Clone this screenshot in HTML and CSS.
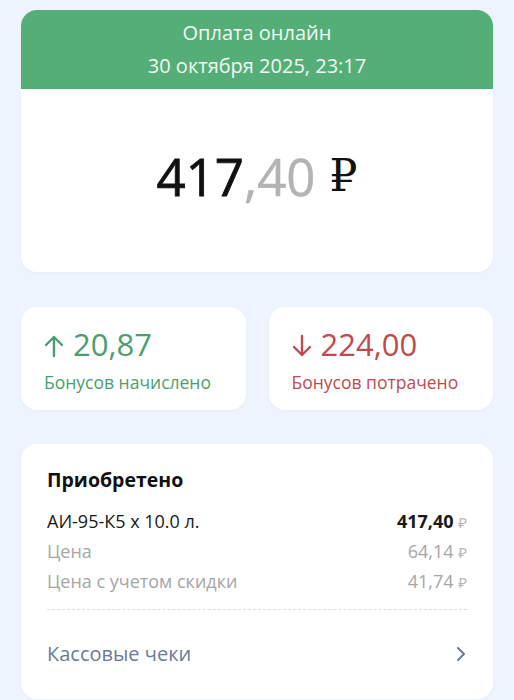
FILE: index.html
```html
<!DOCTYPE html>
<html lang="ru">

<head>
    <meta charset="UTF-8">
    <meta name="viewport" content="width=device-width, initial-scale=1.0">
    <title>Оплата онлайн</title>
    <link rel="stylesheet" href="styles.css">
</head>

<body>
    <main class="page">
        <section class="card payment">
            <header class="payment-head">
                <div>Оплата онлайн</div>
                <div>30 октября 2025, 23:17</div>
            </header>
            <div class="payment-sum">
                <span class="sum-int">417</span><span class="sum-dec">,40</span>
                <span class="sum-cur">₽</span>
            </div>
        </section>

        <section class="bonuses">
            <div class="card bonus bonus-plus">
                <div class="bonus-value">
                    <svg class="arrow" width="20" height="24" viewBox="0 0 20 24">
                        <path d="M10 22 V3 M2 11 L10 3 L18 11" fill="none" stroke="currentColor" stroke-width="2.4" stroke-linecap="round" stroke-linejoin="round" />
                    </svg>20,87
                </div>
                <div class="bonus-label">Бонусов начислено</div>
            </div>
            <div class="card bonus bonus-minus">
                <div class="bonus-value">
                    <svg class="arrow" width="20" height="24" viewBox="0 0 20 24">
                        <path d="M10 2 V21 M2 13 L10 21 L18 13" fill="none" stroke="currentColor" stroke-width="2.4" stroke-linecap="round" stroke-linejoin="round" />
                    </svg>224,00
                </div>
                <div class="bonus-label">Бонусов потрачено</div>
            </div>
        </section>

        <section class="card purchase">
            <h2>Приобретено</h2>
            <div class="row row-main">
                <span>АИ-95-К5 х 10.0 л.</span>
                <span><b>417,40</b> <span class="rub">₽</span></span>
            </div>
            <div class="row">
                <span>Цена</span>
                <span>64,14 <span class="rub">₽</span></span>
            </div>
            <div class="row">
                <span>Цена с учетом скидки</span>
                <span>41,74 <span class="rub">₽</span></span>
            </div>
            <div class="divider"></div>
            <a class="receipts" href="#">
                <span>Кассовые чеки</span>
                <svg width="12" height="18" viewBox="0 0 12 18">
                    <path d="M3 3 L9 9 L3 15" fill="none" stroke="#6a7c97" stroke-width="2" stroke-linecap="round" stroke-linejoin="round" />
                </svg>
            </a>
        </section>
    </main>
</body>

</html>
```

FILE: styles.css
```css
body {
    margin: 0;
    background-color: #eef4fd;
    font-family: "Open Sans", "Noto Sans", sans-serif;
    color: #1a1a1a;
}

.page {
    padding: 10px 21px 0;
}

.card {
    background-color: #fff;
    border-radius: 16px;
    box-shadow: 0 1px 3px rgba(120, 140, 170, 0.06);
}

.payment {
    overflow: hidden;
}

.payment-head {
    background-color: #55ae78;
    color: #f2f8f4;
    text-align: center;
    font-size: 20px;
    line-height: 33px;
    padding: 6px 0 7px;
}

.payment-sum {
    height: 183px;
    display: flex;
    justify-content: center;
    align-items: center;
    font-size: 51px;
    padding-bottom: 10px;
    box-sizing: border-box;
}

.sum-int {
    color: #111;
    -webkit-text-stroke: 0.8px #111;
}

.sum-dec {
    color: #b3b3b3;
    -webkit-text-stroke: 0.5px #b3b3b3;
}

.sum-cur {
    margin-left: 14px;
    font-family: "DejaVu Serif", serif;
    font-size: 44px;
    color: #111;
}

.bonuses {
    display: grid;
    grid-template-columns: 1fr 1fr;
    gap: 23px;
    margin-top: 35px;
}

.bonus {
    padding: 18px 10px 16px 23px;
}

.bonus-value {
    display: flex;
    align-items: center;
    font-size: 31px;
    line-height: 38px;
}

.arrow {
    margin-right: 9px;
    margin-top: 3px;
}

.bonus-label {
    font-size: 17.5px;
    line-height: 24px;
    margin-top: 7px;
}

.bonus-plus {
    color: #4b9f6f;
}

.bonus-minus {
    color: #c04a4f;
}

.purchase {
    margin-top: 34px;
    padding: 23px 26px 32px;
}

.purchase h2 {
    margin: 0 0 14px;
    font-size: 19.5px;
    line-height: 26px;
    font-weight: 700;
    color: #111;
}

.row {
    display: flex;
    justify-content: space-between;
    font-size: 18px;
    line-height: 29px;
    color: #a6a6a6;
}

.row-main {
    color: #1a1a1a;
}

.row-main b {
    font-weight: 700;
}

.rub {
    color: #b8b8b8;
    font-size: 15px;
}

.divider {
    margin-top: 12px;
    border-top: 1px dashed #d8dde4;
}

.receipts {
    display: flex;
    justify-content: space-between;
    align-items: center;
    margin-top: 31px;
    font-size: 20px;
    line-height: 26px;
    color: #6a7c97;
    text-decoration: none;
}
```
